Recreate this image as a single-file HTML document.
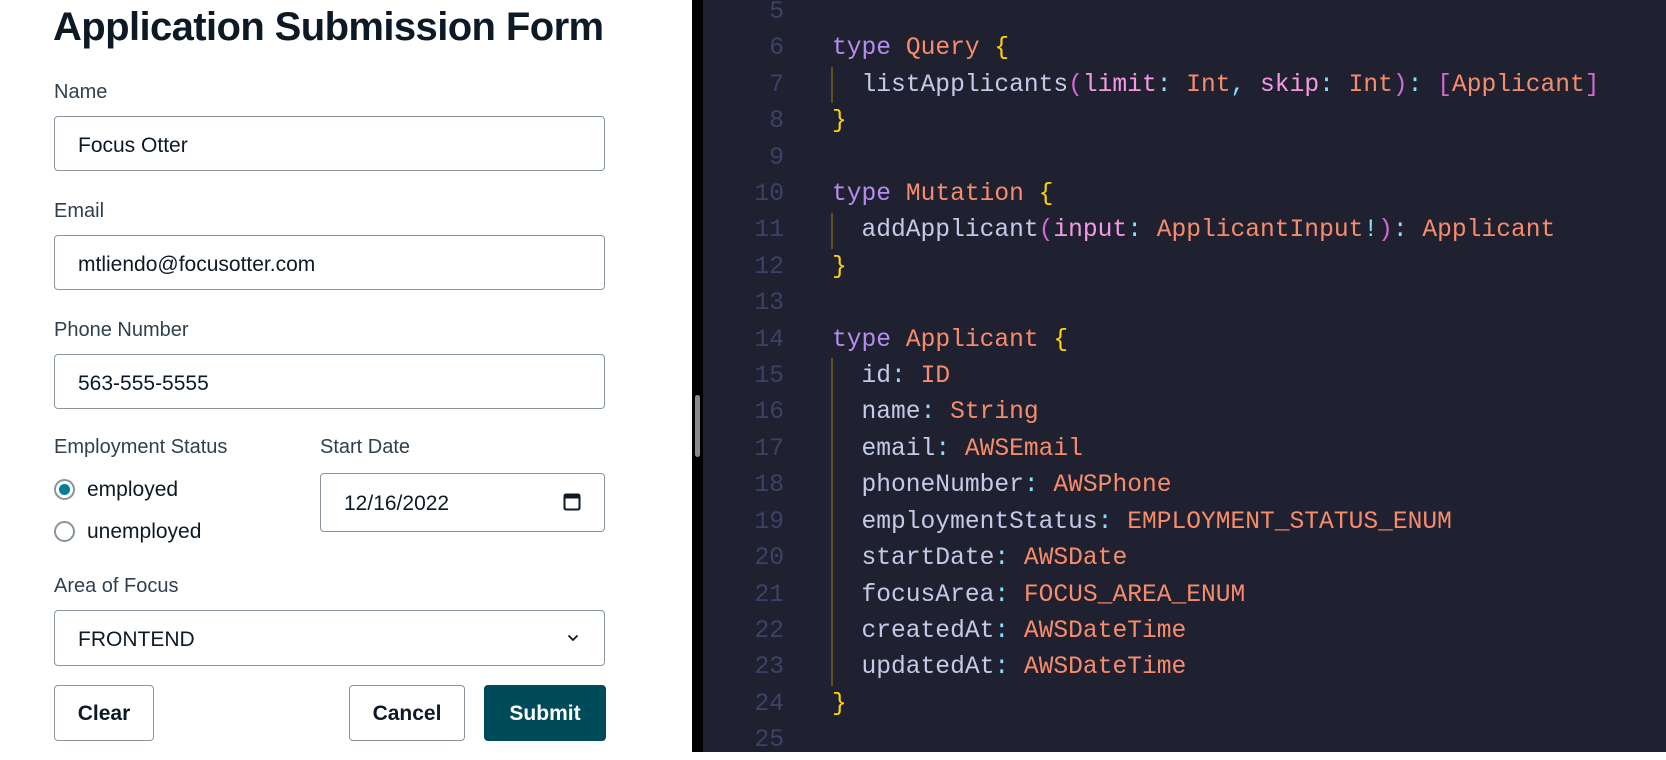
<!DOCTYPE html>
<html><head><meta charset="utf-8"><style>
*{margin:0;padding:0;box-sizing:border-box}
body{width:1666px;height:752px;overflow:hidden;background:#fff;position:relative;font-family:"Liberation Sans",sans-serif;color:#0d1a26}
.a{position:absolute}
h1{position:absolute;left:53px;top:5px;font-size:40px;font-weight:bold;letter-spacing:-0.6px;color:#0d1a26;white-space:nowrap}
.lbl{position:absolute;font-size:20px;color:#304050;white-space:nowrap}
.inp{position:absolute;left:54px;width:551px;height:55px;border:1px solid #89949f;border-radius:4px;font-size:21px;padding-left:23px;line-height:57px;color:#0d1a26}
.btn{position:absolute;top:685px;height:56px;border:1px solid #89949f;border-radius:4px;font-size:21px;font-weight:bold;text-align:center;line-height:56px;color:#0d1a26}
.radio{position:absolute;left:54px;width:21px;height:21px;border:2px solid #89949f;border-radius:50%}
.code{position:absolute;left:703px;top:0;width:963px;height:752px;background:#1f2130;font-family:"Liberation Mono",monospace;font-size:24.6px}
.nums{position:absolute;left:0;top:-5px;width:81px;text-align:right;color:#3c4266;line-height:36.4px}
.src{position:absolute;left:129px;top:-5px;white-space:pre;color:#c3cbe8;line-height:36.4px}
.k{color:#b58cf0}.t{color:#f78c6c}.b{color:#ffd400}.p{color:#d16ad0}.g{color:#f49ae3}.c{color:#89ddff}
.guide{position:absolute;left:128px;width:2px;background:#5e5120}
</style></head><body>
<h1>Application Submission Form</h1>
<div class="lbl" style="left:54px;top:81px">Name</div>
<div class="inp" style="top:116px">Focus Otter</div>
<div class="lbl" style="left:54px;top:200px">Email</div>
<div class="inp" style="top:235px">mtliendo@focusotter.com</div>
<div class="lbl" style="left:54px;top:319px">Phone Number</div>
<div class="inp" style="top:354px">563-555-5555</div>
<div class="lbl" style="left:54px;top:436px">Employment Status</div>
<div class="lbl" style="left:320px;top:436px">Start Date</div>
<div class="radio" style="top:479px"><div class="a" style="left:3px;top:3px;width:11px;height:11px;border-radius:50%;background:#047d95"></div></div>
<div class="lbl" style="left:87px;top:478px;color:#0d1a26;font-size:21px">employed</div>
<div class="radio" style="top:521px"></div>
<div class="lbl" style="left:87px;top:520px;color:#0d1a26;font-size:21px">unemployed</div>
<div class="inp" style="left:320px;width:285px;top:473px;height:59px;line-height:59px">12/16/2022
<svg class="a" style="left:242px;top:18px" width="18" height="19" viewBox="0 0 18 19"><rect x="1.5" y="2.5" width="15" height="15" rx="1.5" fill="none" stroke="#0d1a26" stroke-width="2"/><rect x="1.5" y="2.5" width="15" height="4" fill="#0d1a26"/></svg></div>
<div class="lbl" style="left:54px;top:575px">Area of Focus</div>
<div class="inp" style="top:610px;height:56px;line-height:57px">FRONTEND
<svg class="a" style="left:512px;top:23px" width="12" height="8" viewBox="0 0 12 8"><path d="M1.5 1.5L6 6L10.5 1.5" fill="none" stroke="#0d1a26" stroke-width="1.8"/></svg></div>
<div class="btn" style="left:54px;width:100px">Clear</div>
<div class="btn" style="left:349px;width:116px">Cancel</div>
<div class="btn" style="left:484px;width:122px;background:#004b5a;border-color:#004b5a;color:#fff">Submit</div>

<div class="a" style="left:692px;top:0;width:11px;height:752px;background:#000"></div>
<div class="a" style="left:695px;top:395px;width:5px;height:62px;border-radius:3px;background:#8a8a8a"></div>

<div class="code">
<div class="guide" style="top:67px;height:36px"></div>
<div class="guide" style="top:213px;height:36px"></div>
<div class="guide" style="top:358px;height:328px"></div>
<div class="nums">5<br>6<br>7<br>8<br>9<br>10<br>11<br>12<br>13<br>14<br>15<br>16<br>17<br>18<br>19<br>20<br>21<br>22<br>23<br>24<br>25</div>
<div class="src">
<span class="k">type</span> <span class="t">Query</span> <span class="b">{</span>
  listApplicants<span class="p">(</span><span class="g">limit</span><span class="c">:</span> <span class="t">Int</span><span class="c">,</span> <span class="g">skip</span><span class="c">:</span> <span class="t">Int</span><span class="p">)</span><span class="c">:</span> <span class="p">[</span><span class="t">Applicant</span><span class="p">]</span>
<span class="b">}</span>

<span class="k">type</span> <span class="t">Mutation</span> <span class="b">{</span>
  addApplicant<span class="p">(</span><span class="g">input</span><span class="c">:</span> <span class="t">ApplicantInput</span><span class="c">!</span><span class="p">)</span><span class="c">:</span> <span class="t">Applicant</span>
<span class="b">}</span>

<span class="k">type</span> <span class="t">Applicant</span> <span class="b">{</span>
  id<span class="c">:</span> <span class="t">ID</span>
  name<span class="c">:</span> <span class="t">String</span>
  email<span class="c">:</span> <span class="t">AWSEmail</span>
  phoneNumber<span class="c">:</span> <span class="t">AWSPhone</span>
  employmentStatus<span class="c">:</span> <span class="t">EMPLOYMENT_STATUS_ENUM</span>
  startDate<span class="c">:</span> <span class="t">AWSDate</span>
  focusArea<span class="c">:</span> <span class="t">FOCUS_AREA_ENUM</span>
  createdAt<span class="c">:</span> <span class="t">AWSDateTime</span>
  updatedAt<span class="c">:</span> <span class="t">AWSDateTime</span>
<span class="b">}</span>
</div>
</div>
</body></html>
